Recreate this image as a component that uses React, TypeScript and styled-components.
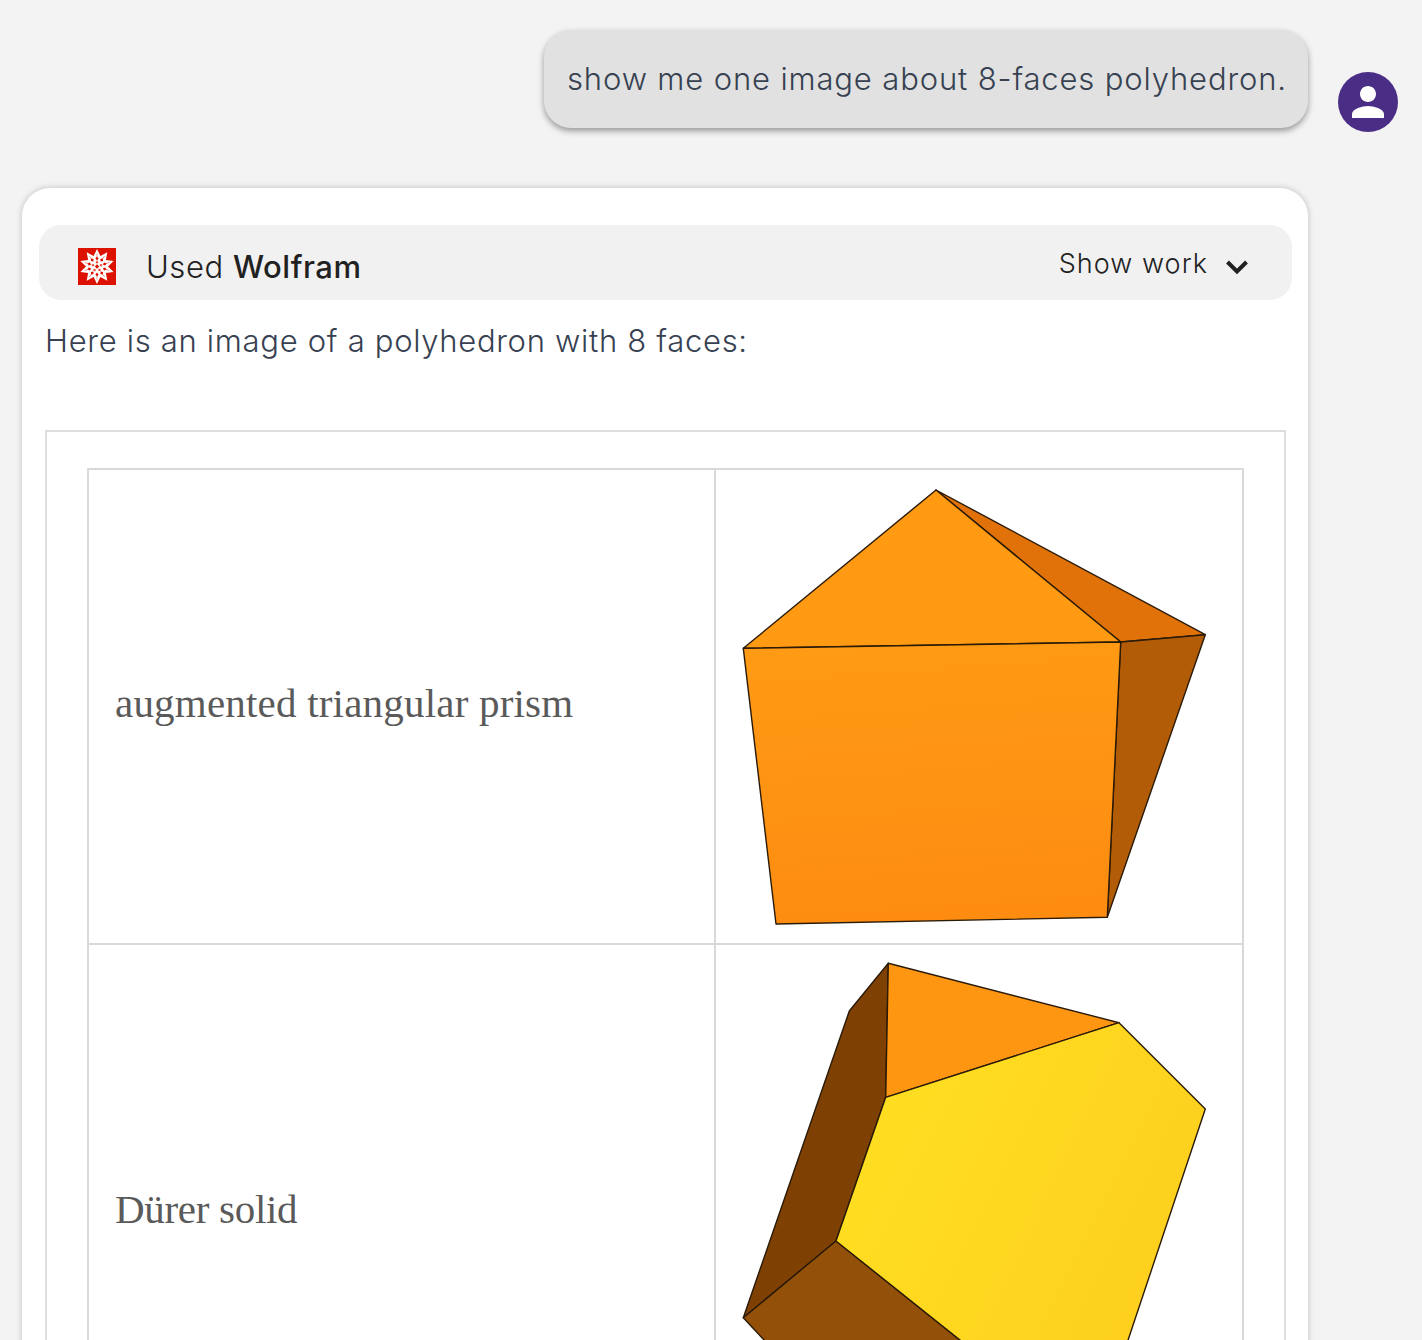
import React from "react";
import styled, { createGlobalStyle } from "styled-components";

const Global = createGlobalStyle`
  html, body { margin: 0; padding: 0; background: #f3f3f3; height: 1340px; overflow: hidden; }
  #root { height: 1340px; overflow: hidden; }
`;

const sans = `"Inter", "Noto Sans", "Liberation Sans", sans-serif`;

const Page = styled.main`
  display: flex;
  flex-direction: column;
  height: 1340px;
  padding: 30px 24px 0 22px;
  box-sizing: border-box;
  overflow: hidden;
  font-family: ${sans};
`;

const UserRow = styled.section`
  display: flex;
  align-items: flex-start;
  justify-content: flex-end;
  gap: 30px;
  margin-bottom: 56px;
`;

const Bubble = styled.div`
  display: flex;
  align-items: center;
  box-sizing: border-box;
  height: 98px;
  width: 764px;
  padding: 0 0 2px 23px;
  background: #e1e1e1;
  border-radius: 27px;
  box-shadow: 0 3px 6px rgba(0, 0, 0, 0.38);
  color: #374151;
  font-size: 31px;
  font-weight: 300;
  letter-spacing: 0.86px;
  white-space: nowrap;
`;

const Avatar = styled.div`
  flex: none;
  width: 60px;
  height: 60px;
  margin-top: 42px;
  border-radius: 50%;
  background: #4a2d84;
  display: flex;
  align-items: center;
  justify-content: center;
`;

const Card = styled.article`
  width: 1286px;
  flex: 1;
  box-sizing: border-box;
  padding: 37px 22px 0 17px;
  background: #fff;
  border-radius: 28px 28px 0 0;
  box-shadow: 0 0 6px rgba(0, 0, 0, 0.22);
`;

const ToolBar = styled.div`
  display: flex;
  align-items: center;
  justify-content: space-between;
  box-sizing: border-box;
  height: 75px;
  padding: 8px 43px 0 39px;
  margin-right: -6px;
  background: #f1f1f1;
  border-radius: 22px;
  color: #212121;
`;

const ToolLabel = styled.div`
  display: flex;
  align-items: center;
  gap: 30px;
`;

const ToolText = styled.span`
  font-size: 31px;
  font-weight: 300;
  letter-spacing: 0.55px;
  b { font-weight: 500; }
`;

const ShowWork = styled.div`
  display: flex;
  align-items: center;
  gap: 17px;
  font-size: 27px;
  font-weight: 300;
  letter-spacing: 1.05px;
  margin-top: -7px;
`;

const ChevronSlot = styled.span`
  display: flex;
  margin-top: 7px;
`;

const Intro = styled.p`
  margin: 21px 0 0 6px;
  color: #374151;
  font-size: 31px;
  line-height: 40px;
  font-weight: 300;
  letter-spacing: 0.7px;
`;

const Figure = styled.div`
  box-sizing: border-box;
  margin: 69px 0 0 6px;
  width: 1241px;
  padding: 36px 40px 0;
  border: 2px solid #dedede;
  border-bottom: none;
  height: 920px;
  overflow: hidden;
`;

const Table = styled.div`
  display: grid;
  grid-template-columns: 627px 1fr;
  grid-template-rows: 475px 500px;
  width: 1157px;
  border-top: 2px solid #d9d9d9;
  border-left: 2px solid #d9d9d9;
  border-right: 2px solid #d9d9d9;
  box-sizing: border-box;
`;

const NameCell = styled.div`
  display: flex;
  align-items: center;
  box-sizing: border-box;
  padding-left: 26px;
  border-right: 2px solid #d9d9d9;
  border-bottom: 2px solid #d9d9d9;
  color: #5a5a5a;
  font-family: "Liberation Serif", "DejaVu Serif", serif;
  font-size: 41px;
`;

const NameText = styled.span<{ $offset: number; $track: number }>`
  margin-top: ${(p) => p.$offset}px;
  letter-spacing: ${(p) => p.$track}px;
`;

const ShapeCell = styled.div`
  box-sizing: border-box;
  border-bottom: 2px solid #d9d9d9;
  overflow: hidden;
`;

const Shape = styled.svg`
  display: block;
  width: 527px;
  height: 500px;
`;

const Person = () => (
  <svg width="48" height="48" viewBox="0 0 24 24" fill="#fff" aria-hidden="true">
    <path d="M12 12c2.21 0 4-1.79 4-4s-1.79-4-4-4-4 1.79-4 4 1.79 4 4 4zm0 2c-2.67 0-8 1.34-8 4v2h16v-2c0-2.66-5.33-4-8-4z" />
  </svg>
);

const Chevron = () => (
  <svg width="24" height="16" viewBox="0 0 24 16" aria-hidden="true">
    <polyline points="2.5,3 12,12.5 21.5,3" fill="none" stroke="#212121" strokeWidth="4" />
  </svg>
);

const Spikey = () => {
  const outer: string[] = [];
  for (let i = 0; i < 20; i++) {
    const a = (Math.PI * i) / 10 - Math.PI / 2;
    const r = i % 2 === 0 ? 17.5 : 11;
    outer.push(`${(19 + r * Math.cos(a)).toFixed(2)},${(18.5 + r * Math.sin(a)).toFixed(2)}`);
  }
  const ticks = Array.from({ length: 10 }, (_, i) => (i * 360) / 10);
  return (
    <svg width="38" height="37" viewBox="0 0 38 37" aria-hidden="true">
      <rect width="38" height="37" fill="#dd1100" />
      <polygon points={outer.join(" ")} fill="#fff" />
      {ticks.map((deg) => (
        <g key={deg} transform={`rotate(${deg} 19 18.5)`}>
          <line x1="19" y1="5.5" x2="19" y2="9.5" stroke="#f08a7e" strokeWidth="0.8" />
          <polygon points="19,8.5 20.6,10.4 19,12.4 17.4,10.4" fill="#dd1100" />
        </g>
      ))}
      {[0, 72, 144, 216, 288].map((deg) => (
        <polygon key={deg} transform={`rotate(${deg} 19 18.5)`} points="19,12.6 20.4,14.4 19,15.8 17.6,14.4" fill="#e8432f" />
      ))}
      <polygon points="19,16.2 21.2,18.5 19,20.8 16.8,18.5" fill="#dd1100" />
    </svg>
  );
};

const edge = { stroke: "#2a1a08", strokeWidth: 1.4, strokeLinejoin: "round" as const };

const Prism = () => (
  <Shape viewBox="716 470 527 500" aria-hidden="true">
    <defs>
      <linearGradient id="pf" x1="0" y1="0" x2="0.1" y2="1">
        <stop offset="0" stopColor="#ff9b14" />
        <stop offset="1" stopColor="#fd8c11" />
      </linearGradient>
    </defs>
    <polygon points="936,490 1205.3,634.7 1120.7,642" fill="#e07209" {...edge} />
    <polygon points="1120.7,642 1205.3,634.7 1107.3,917.3" fill="#b35c08" {...edge} />
    <polygon points="936,490 1120.7,642 743.3,648.3" fill="#ff9a12" {...edge} />
    <polygon points="743.3,648.3 1120.7,642 1107.3,917.3 776,924" fill="url(#pf)" {...edge} />
  </Shape>
);

const Durer = () => (
  <Shape viewBox="716 945 527 500" aria-hidden="true">
    <defs>
      <linearGradient id="yf" x1="0" y1="0" x2="1" y2="0.5">
        <stop offset="0" stopColor="#ffe122" />
        <stop offset="1" stopColor="#fdd01e" />
      </linearGradient>
    </defs>
    <polygon points="888.3,963.3 885.7,1097.3 836,1241 743.3,1317.7 849.3,1011" fill="#7e4003" {...edge} />
    <polygon points="743.3,1317.7 836,1241 1035,1400 820,1400" fill="#925008" {...edge} />
    <polygon points="888.3,963.3 1119,1022.7 885.7,1097.3" fill="#ff9612" {...edge} />
    <polygon points="885.7,1097.3 1119,1022.7 1205.3,1109 1108,1400 1035,1400 836,1241" fill="url(#yf)" {...edge} />
  </Shape>
);

export default function App() {
  return (
    <>
      <Global />
      <Page>
        <UserRow>
          <Bubble>show me one image about 8-faces polyhedron.</Bubble>
          <Avatar>
            <Person />
          </Avatar>
        </UserRow>
        <Card>
          <ToolBar>
            <ToolLabel>
              <Spikey />
              <ToolText>
                Used <b>Wolfram</b>
              </ToolText>
            </ToolLabel>
            <ShowWork>
              Show work
              <ChevronSlot>
                <Chevron />
              </ChevronSlot>
            </ShowWork>
          </ToolBar>
          <Intro>Here is an image of a polyhedron with 8 faces:</Intro>
          <Figure>
            <Table>
              <NameCell>
                <NameText $offset={-8} $track={0.2}>augmented triangular prism</NameText>
              </NameCell>
              <ShapeCell>
                <Prism />
              </ShapeCell>
              <NameCell>
                <NameText $offset={30} $track={-0.3}>Dürer solid</NameText>
              </NameCell>
              <ShapeCell>
                <Durer />
              </ShapeCell>
            </Table>
          </Figure>
        </Card>
      </Page>
    </>
  );
}
